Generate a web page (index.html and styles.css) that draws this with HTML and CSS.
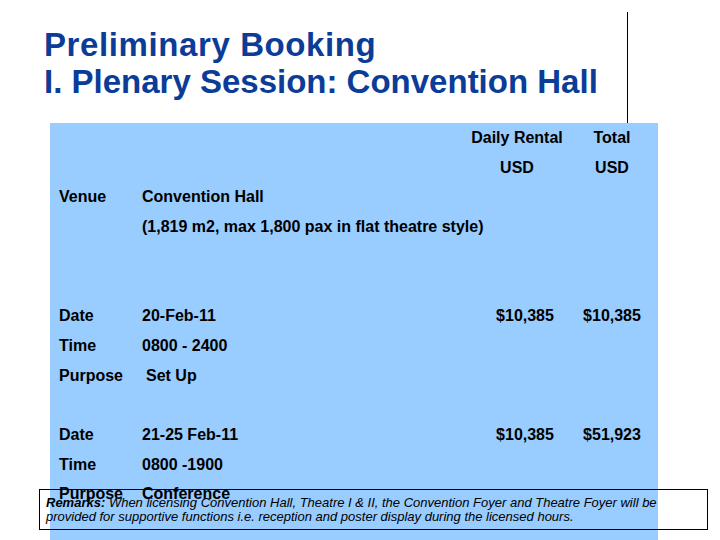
FILE: index.html
```html
<!DOCTYPE html>
<html>
<head>
<meta charset="utf-8">
<title>Preliminary Booking</title>
<link rel="stylesheet" href="styles.css">
</head>
<body>
<div class="slide">
  <header class="title-area">
    <h1 class="title"><span class="title-line1">Preliminary Booking</span><br>I. Plenary Session: Convention Hall</h1>
    <div class="rule"></div>
  </header>
  <section class="sheet">
    <div class="row"><span></span><span></span><span class="num">Daily Rental</span><span class="num">Total</span></div>
    <div class="row"><span></span><span></span><span class="num">USD</span><span class="num">USD</span></div>
    <div class="row"><span>Venue</span><span>Convention Hall</span></div>
    <div class="row"><span></span><span class="wide">(1,819 m2, max 1,800 pax in flat theatre style)</span></div>
    <div class="row"></div>
    <div class="row"></div>
    <div class="row"><span>Date</span><span>20-Feb-11</span><span class="num shift">$10,385</span><span class="num">$10,385</span></div>
    <div class="row"><span>Time</span><span>0800 - 2400</span></div>
    <div class="row"><span>Purpose</span><span class="indent">Set Up</span></div>
    <div class="row"></div>
    <div class="row"><span>Date</span><span>21-25 Feb-11</span><span class="num shift">$10,385</span><span class="num">$51,923</span></div>
    <div class="row"><span>Time</span><span>0800 -1900</span></div>
    <div class="row"><span>Purpose</span><span>Conference</span></div>
  </section>
  <div class="remarks"><b>Remarks:</b> When licensing Convention Hall, Theatre I &amp; II, the Convention Foyer and Theatre Foyer will be<br>provided for supportive functions i.e. reception and poster display during the licensed hours.</div>
</div>
</body>
</html>
```
FILE: styles.css
```css
html, body {
  margin: 0;
  padding: 0;
  background: #ffffff;
}
body {
  font-family: "Liberation Sans", Arial, sans-serif;
  color: #000;
}
.slide {
  position: relative;
  width: 720px;
  height: 540px;
  overflow: hidden;
}
.title-area {
  display: flex;
  align-items: flex-start;
  height: 123px;
  padding-left: 44px;
  box-sizing: border-box;
}
.title {
  margin: 0;
  width: 583px;
  padding-top: 26px;
  font-size: 33px;
  line-height: 37px;
  font-weight: bold;
  color: #0b3c98;
  white-space: nowrap;
}
.title-line1 {
  letter-spacing: 0.6px;
}
.rule {
  width: 1px;
  height: 111px;
  margin-top: 12px;
  background: #000;
}
.sheet {
  margin-left: 50px;
  width: 608px;
  height: 417px;
  background: #99ccff;
  padding: 6px 0 0 9px;
  box-sizing: border-box;
  display: flex;
  flex-direction: column;
  gap: 11.7px;
  font-size: 16px;
  font-weight: bold;
  line-height: 18px;
}
.row {
  display: grid;
  grid-template-columns: 83px 321px 108px 82px;
  height: 18px;
  white-space: nowrap;
}
.num {
  text-align: center;
}
.shift {
  padding-left: 16px;
}
.indent {
  padding-left: 4px;
}
.wide {
  grid-column: 2 / 5;
}
.remarks {
  position: absolute;
  left: 39px;
  top: 489px;
  width: 669px;
  height: 41px;
  box-sizing: border-box;
  border: 1px solid #000;
  padding: 6px 6px 0;
  font-size: 13px;
  line-height: 14px;
  font-style: italic;
  white-space: nowrap;
  color: #000;
}
.remarks b {
  font-weight: bold;
}
```
